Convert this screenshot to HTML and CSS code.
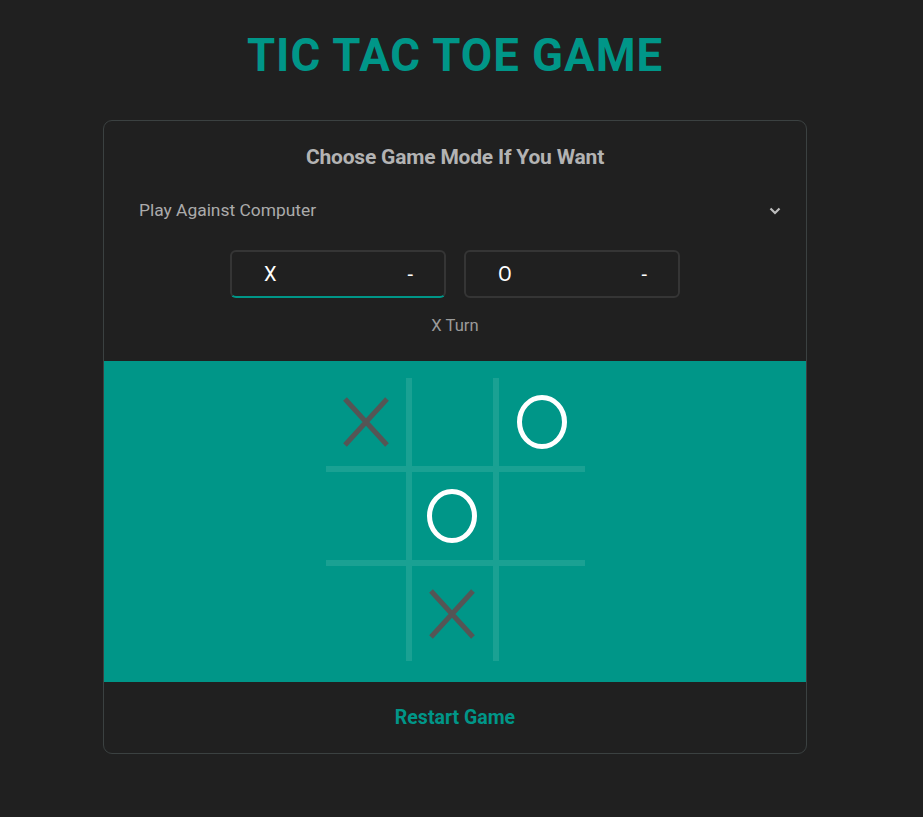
FILE: index.html
```html
<!DOCTYPE html>
<html lang="en">
<head>
<meta charset="utf-8">
<title>Tic Tac Toe Game</title>
<link rel="stylesheet" href="styles.css">
</head>
<body>
<div class="page">
  <h1 class="title">TIC TAC TOE GAME</h1>
  <div class="card">
    <h2 class="mode-title">Choose Game Mode If You Want</h2>
    <div class="select">
      <span>Play Against Computer</span>
      <svg class="chevron" width="12" height="8" viewBox="0 0 12 8"><path d="M1.5 1.5 L6 6 L10.5 1.5" fill="none" stroke="#bdbdbd" stroke-width="2.2"/></svg>
    </div>
    <div class="scores">
      <div class="score active"><span class="sym">X</span><span class="val">-</span></div>
      <div class="score"><span class="sym">O</span><span class="val">-</span></div>
    </div>
    <div class="turn">X Turn</div>
    <div class="board">
      <div class="grid">
        <div class="cell"><svg width="46" height="50" viewBox="0 0 46 50"><path d="M2 2 L44 48 M44 2 L2 48" stroke="#555555" stroke-width="5"/></svg></div>
        <div class="cell"></div>
        <div class="cell"><svg width="52" height="56" viewBox="0 0 52 56"><ellipse cx="26" cy="28" rx="22.5" ry="24.5" fill="none" stroke="#ffffff" stroke-width="5"/></svg></div>
        <div class="cell"></div>
        <div class="cell"><svg width="52" height="56" viewBox="0 0 52 56"><ellipse cx="26" cy="28" rx="22.5" ry="24.5" fill="none" stroke="#ffffff" stroke-width="5"/></svg></div>
        <div class="cell"></div>
        <div class="cell"></div>
        <div class="cell"><svg width="46" height="50" viewBox="0 0 46 50"><path d="M2 2 L44 48 M44 2 L2 48" stroke="#555555" stroke-width="5"/></svg></div>
        <div class="cell"></div>
      </div>
    </div>
    <div class="restart">Restart Game</div>
  </div>
</div>
</body>
</html>
```
FILE: styles.css
```css
html, body {
  margin: 0;
  padding: 0;
  background: #202020;
}
body {
  font-family: Roboto, "Liberation Sans", Arial, sans-serif;
}
.page {
  width: 910px;
  display: flex;
  flex-direction: column;
  align-items: center;
  padding-top: 30px;
}
.title {
  margin: 0;
  font-family: Roboto, "Liberation Sans", Arial, sans-serif;
  font-weight: 700;
  font-size: 45.5px;
  line-height: 52px;
  letter-spacing: 1px;
  color: #009688;
}
.card {
  margin-top: 38px;
  width: 702px;
  border: 1px solid #3b4141;
  border-radius: 9px;
  display: flex;
  flex-direction: column;
  align-items: stretch;
  padding: 25px 0 24px;
  overflow: hidden;
}
.mode-title {
  margin: 0;
  text-align: center;
  font-size: 21px;
  line-height: 22px;
  font-weight: 700;
  letter-spacing: -0.2px;
  color: #b3b3b3;
}
.select {
  margin-top: 22px;
  height: 40px;
  display: flex;
  align-items: center;
  justify-content: space-between;
  padding: 0 25px 0 35px;
  font-size: 17.4px;
  color: #ababab;
}
.chevron {
  margin-top: 1px;
}
.scores {
  margin-top: 20px;
  display: flex;
  justify-content: center;
  gap: 18px;
}
.score {
  box-sizing: border-box;
  width: 216px;
  height: 48px;
  border: 2px solid #353535;
  border-radius: 6px;
  display: flex;
  align-items: center;
  justify-content: space-between;
  padding: 0 31px 0 32px;
  color: #ffffff;
  font-size: 20px;
}
.score.active {
  border-bottom-color: #009688;
}
.score .val {
  font-size: 20px;
}
.turn {
  margin-top: 18px;
  text-align: center;
  font-size: 16.6px;
  line-height: 20px;
  color: #9a9a9a;
}
.board {
  margin-top: 25px;
  background: #009688;
  height: 321px;
  box-sizing: border-box;
  padding-top: 17px;
  display: flex;
  justify-content: center;
  align-items: flex-start;
}
.grid {
  display: grid;
  grid-template-columns: 80px 81px 86px;
  grid-template-rows: 88px 88px 95px;
  gap: 6px;
  background: #1aa193;
}
.cell {
  background: #009688;
  display: flex;
  align-items: center;
  justify-content: center;
}
.restart {
  margin-top: 25px;
  text-align: center;
  font-size: 19.5px;
  line-height: 22px;
  font-weight: 700;
  color: #009688;
}
```
